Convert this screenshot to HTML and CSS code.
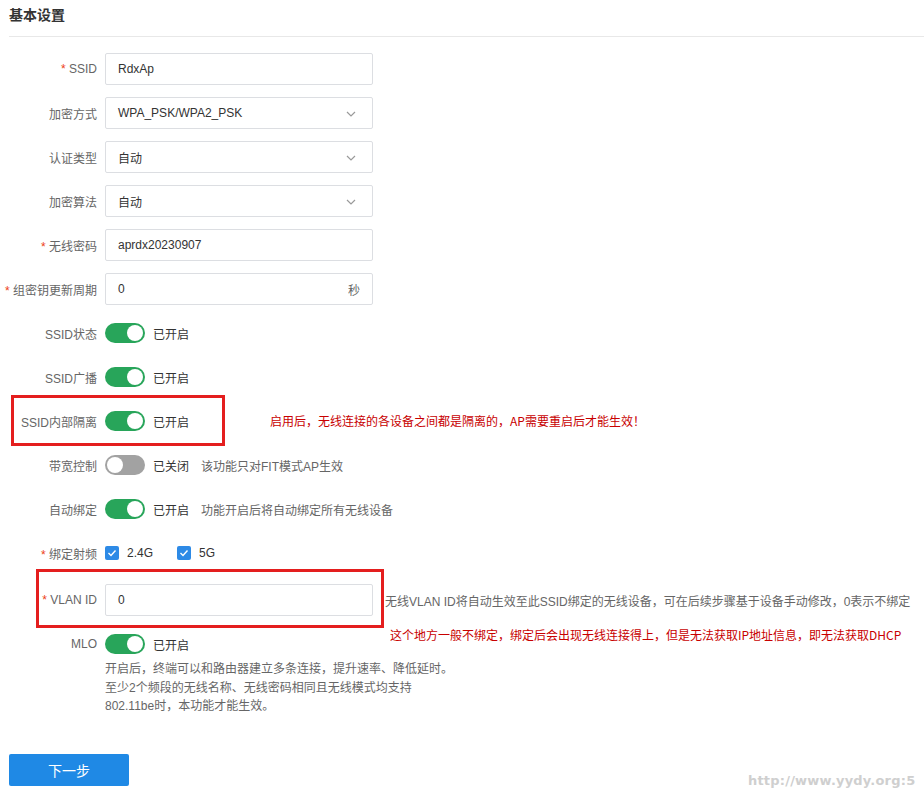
FILE: index.html
```html
<!DOCTYPE html>
<html lang="zh-CN">
<head>
<meta charset="utf-8">
<title>基本设置</title>
<link rel="stylesheet" href="styles.css">
</head>
<body>
<div class="page">
  <div class="header">基本设置</div>
  <div class="form">
    <div class="row">
      <div class="lbl"><span class="req">*</span> SSID</div>
      <div class="input">RdxAp</div>
    </div>
    <div class="row">
      <div class="lbl">加密方式</div>
      <div class="input select">WPA_PSK/WPA2_PSK<svg class="chev" width="10" height="6" viewBox="0 0 10 6"><path d="M1 1 L5 5 L9 1" fill="none" stroke="#9a9a9a" stroke-width="1.2"/></svg></div>
    </div>
    <div class="row">
      <div class="lbl">认证类型</div>
      <div class="input select">自动<svg class="chev" width="10" height="6" viewBox="0 0 10 6"><path d="M1 1 L5 5 L9 1" fill="none" stroke="#9a9a9a" stroke-width="1.2"/></svg></div>
    </div>
    <div class="row">
      <div class="lbl">加密算法</div>
      <div class="input select">自动<svg class="chev" width="10" height="6" viewBox="0 0 10 6"><path d="M1 1 L5 5 L9 1" fill="none" stroke="#9a9a9a" stroke-width="1.2"/></svg></div>
    </div>
    <div class="row">
      <div class="lbl"><span class="req">*</span> 无线密码</div>
      <div class="input">aprdx20230907</div>
    </div>
    <div class="row">
      <div class="lbl"><span class="req">*</span> 组密钥更新周期</div>
      <div class="input suffix">0<span class="unit">秒</span></div>
    </div>
    <div class="row">
      <div class="lbl">SSID状态</div>
      <span class="switch on"><span class="knob"></span></span><span class="state">已开启</span>
    </div>
    <div class="row">
      <div class="lbl">SSID广播</div>
      <span class="switch on"><span class="knob"></span></span><span class="state">已开启</span>
    </div>
    <div class="row">
      <div class="lbl">SSID内部隔离</div>
      <span class="switch on"><span class="knob"></span></span><span class="state">已开启</span>
    </div>
    <div class="row">
      <div class="lbl">带宽控制</div>
      <span class="switch off"><span class="knob"></span></span><span class="state">已关闭</span><span class="tip">该功能只对FIT模式AP生效</span>
    </div>
    <div class="row">
      <div class="lbl">自动绑定</div>
      <span class="switch on"><span class="knob"></span></span><span class="state">已开启</span><span class="tip">功能开启后将自动绑定所有无线设备</span>
    </div>
    <div class="row">
      <div class="lbl"><span class="req">*</span> 绑定射频</div>
      <span class="check"><svg width="10" height="8" viewBox="0 0 10 8"><path d="M1.5 4 L4 6.5 L8.5 1.5" fill="none" stroke="#fff" stroke-width="1.4"/></svg></span><span class="cktext">2.4G</span>
      <span class="check"><svg width="10" height="8" viewBox="0 0 10 8"><path d="M1.5 4 L4 6.5 L8.5 1.5" fill="none" stroke="#fff" stroke-width="1.4"/></svg></span><span class="cktext">5G</span>
    </div>
    <div class="row vlan">
      <div class="lbl"><span class="req">*</span> VLAN ID</div>
      <div class="input">0</div>
      <span class="help">无线VLAN ID将自动生效至此SSID绑定的无线设备，可在后续步骤基于设备手动修改，0表示不绑定</span>
    </div>
    <div class="mlo">
      <div class="lbl mlo-lbl">MLO</div>
      <div class="mlo-body">
        <div class="mlo-line"><span class="switch on"><span class="knob"></span></span><span class="state">已开启</span></div>
        <div class="desc">开启后，终端可以和路由器建立多条连接，提升速率、降低延时。<br>至少2个频段的无线名称、无线密码相同且无线模式均支持<br>802.11be时，本功能才能生效。</div>
      </div>
    </div>
  </div>
  <button class="next">下一步</button>

  <div class="mark box1"></div>
  <div class="note note1">启用后，无线连接的各设备之间都是隔离的，AP需要重启后才能生效！</div>
  <div class="mark box2"></div>
  <div class="note note2">这个地方一般不绑定，绑定后会出现无线连接得上，但是无法获取IP地址信息，即无法获取DHCP</div>
  <div class="watermark">http://www.yydy.org:5</div>
</div>
</body>
</html>
```
FILE: styles.css
```css
* { box-sizing: border-box; }
html, body { margin: 0; padding: 0; background: #fff; }
body {
  font-family: "Liberation Sans", Arial, "Noto Sans CJK SC", sans-serif;
  font-size: 12px;
  color: #333;
}
.page {
  position: relative;
  width: 924px;
  height: 794px;
  overflow: hidden;
}
.header {
  margin-left: 9px;
  height: 37px;
  line-height: 30px;
  font-size: 14px;
  font-weight: bold;
  color: #333;
  border-bottom: 1px solid #e8e8e8;
}
.form { margin-top: 16px; }
.row {
  display: flex;
  align-items: center;
  height: 32px;
  margin-bottom: 12px;
}
.lbl {
  width: 105px;
  flex: none;
  padding-right: 8px;
  text-align: right;
  color: #666;
  white-space: nowrap;
}
.req { color: #ed4014; }
.input {
  position: relative;
  display: flex;
  align-items: center;
  width: 268px;
  height: 32px;
  padding: 0 12px;
  border: 1px solid #dcdee2;
  border-radius: 2px;
  color: #333;
  flex: none;
}
.select .chev {
  position: absolute;
  right: 16px;
  top: 13px;
}
.suffix .unit {
  position: absolute;
  right: 12px;
  color: #666;
}
.switch {
  position: relative;
  display: inline-block;
  width: 40px;
  height: 20px;
  border-radius: 10px;
  flex: none;
}
.switch.on { background: #28a55a; }
.switch.off { background: #a2a2a2; }
.switch .knob {
  position: absolute;
  top: 2px;
  width: 16px;
  height: 16px;
  border-radius: 50%;
  background: #fff;
}
.switch.on .knob { right: 2px; }
.switch.off .knob { left: 2px; }
.state { margin-left: 8px; color: #333; }
.tip { margin-left: 12px; color: #666; }
.check {
  display: inline-flex;
  align-items: center;
  justify-content: center;
  width: 14px;
  height: 14px;
  border-radius: 2px;
  background: #2d8ae6;
  flex: none;
}
.cktext { margin-left: 8px; margin-right: 24px; color: #333; }
.vlan { margin-top: 15px; }
.help { margin-left: 12px; color: #666; white-space: nowrap; }
.mlo { display: flex; margin-top: 1px; }
.mlo-lbl { height: 32px; line-height: 32px; }
.mlo-line { display: flex; align-items: center; height: 32px; }
.desc {
  line-height: 18.5px;
  color: #666;
}
.next {
  display: block;
  margin: 38px 0 0 9px;
  width: 120px;
  height: 32px;
  border: none;
  border-radius: 2px;
  background: #1f89e5;
  color: #fff;
  font-family: "Liberation Sans", Arial, "Noto Sans CJK SC", sans-serif;
  font-size: 14px;
}
.mark {
  position: absolute;
  border: 3px solid #e41e1e;
}
.box1 { left: 11px; top: 395px; width: 214px; height: 51px; }
.box2 { left: 36px; top: 569px; width: 348px; height: 59px; }
.note {
  position: absolute;
  font-family: "Noto Sans CJK SC", sans-serif;
  font-size: 12px;
  color: #c80000;
  white-space: nowrap;
  line-height: 16px;
}
.note1 { left: 270px; top: 413px; }
.note2 { left: 390px; top: 627px; }
.watermark {
  position: absolute;
  left: 748px;
  top: 773px;
  font-family: "DejaVu Sans", sans-serif;
  font-size: 13px;
  font-weight: bold;
  color: #cfcfcf;
  letter-spacing: 0.2px;
  white-space: nowrap;
}
```
